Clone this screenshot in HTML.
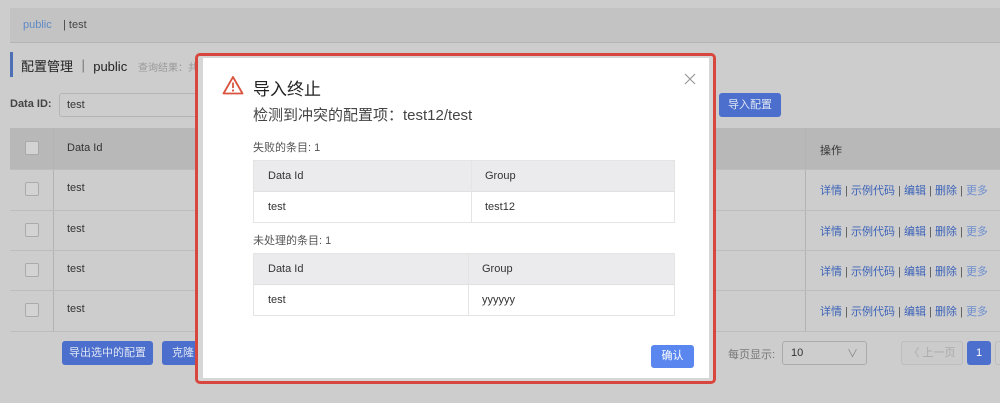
<!DOCTYPE html>
<html><head><meta charset="utf-8"><style>
*{box-sizing:border-box;margin:0;padding:0}
body{width:1000px;height:403px;overflow:hidden;background:#cdcdcd;font-family:"Liberation Sans","Noto Sans CJK SC",sans-serif;font-size:12px;color:#333;position:relative}
.a{position:absolute}
.lnk{color:#3c63b8}
</style></head><body>
<div class="a" style="left:10px;top:8px;width:990px;height:35px;background:#c3c3c3;border-bottom:1px solid #b5b5b5"></div>
<div class="a" style="left:23px;top:19px;color:#5d89c4;font-size:11px">public</div>
<div class="a" style="left:63px;top:19px;color:#444;font-size:11px">| test</div>
<div class="a" style="left:10px;top:52px;width:3px;height:25px;background:#4d6fb5"></div>
<div class="a" style="left:21px;top:56px;font-size:13px;color:#222">配置管理 ｜ public</div>
<div class="a" style="left:138px;top:59px;font-size:10px;color:#999">查询结果：共</div>
<div class="a" style="left:10px;top:98px;font-weight:bold;font-size:11px;color:#444">Data ID:</div>
<div class="a" style="left:59px;top:93px;width:150px;height:24px;border:1px solid #b5b5b5;border-radius:3px;background:#cdcdcd;padding:5px 7px;font-size:11px">test</div>
<div class="a" style="left:719px;top:93px;width:62px;height:24px;background:#4c6ecc;border-radius:3px;color:#dfe6f5;font-size:11px;text-align:center;line-height:24px">导入配置</div>
<div class="a" style="left:10px;top:128px;width:990px;height:41px;background:#b8b8b8"></div>
<div class="a" style="left:53px;top:128px;width:1px;height:203px;background:#b3b3b3"></div>
<div class="a" style="left:805px;top:128px;width:1px;height:203px;background:#b3b3b3"></div>
<div class="a" style="left:67px;top:142px;font-size:11px">Data Id</div>
<div class="a" style="left:820px;top:142px;font-size:11px">操作</div>
<div class="a" style="left:25px;top:141px;width:14px;height:14px;border:1px solid #aaa;border-radius:2px;background:#d3d3d3"></div>
<div id="rows"></div>
<script>
var h='';[169,210,250,290].forEach(function(y){h+='<div class="a" style="left:10px;top:'+y+'px;width:990px;height:1px;background:#bdbdbd"></div><div class="a" style="left:25px;top:'+(y+13)+'px;width:14px;height:14px;border:1px solid #aaa;border-radius:2px;background:#d3d3d3"></div><div class="a" style="left:67px;top:'+(y+13)+'px;font-size:11px">test</div><div class="a" style="left:820px;top:'+(y+13)+'px;font-size:11px;color:#555"><span class="lnk">详情</span> | <span class="lnk">示例代码</span> | <span class="lnk">编辑</span> | <span class="lnk">删除</span> | <span style="color:#6f8fcf">更多</span></div>'});h+='<div class="a" style="left:10px;top:331px;width:990px;height:1px;background:#bdbdbd"></div>';document.getElementById('rows').innerHTML=h;
</script>
<div class="a" style="left:62px;top:341px;width:91px;height:24px;background:#4c6ecc;border-radius:3px;color:#dfe6f5;font-size:11px;text-align:center;line-height:24px">导出选中的配置</div>
<div class="a" style="left:162px;top:341px;width:40px;height:24px;background:#4c6ecc;border-radius:3px;color:#dfe6f5;font-size:11px;line-height:24px;padding-left:10px">克隆</div>
<div class="a" style="left:728px;top:346px;font-size:11px;color:#777">每页显示:</div>
<div class="a" style="left:782px;top:341px;width:85px;height:24px;border:1px solid #aaa;border-radius:3px;padding:5px 8px;font-size:11px">10<span style="position:absolute;right:8px;top:3px;color:#888">∨</span></div>
<div class="a" style="left:901px;top:341px;width:62px;height:24px;border:1px solid #bdbdbd;border-radius:3px;background:#cbcbcb;color:#aaa;font-size:11px;text-align:center;line-height:22px">〈 上一页</div>
<div class="a" style="left:967px;top:341px;width:24px;height:24px;background:#4c6ecc;border-radius:3px;color:#fff;font-size:11px;text-align:center;line-height:24px">1</div>
<div class="a" style="left:995px;top:341px;width:8px;height:24px;border:1px solid #bdbdbd;border-radius:3px"></div>

<div class="a" style="left:195px;top:53px;width:521px;height:331px;border:3px solid #d8473d;border-radius:5px;background:#d6d6d6"></div>
<div class="a" style="left:203px;top:58px;width:506px;height:320px;background:#fff">
<svg class="a" style="left:19px;top:17px" width="22" height="20" viewBox="0 0 22 20"><path d="M11 2 L20.5 18.5 L1.5 18.5 Z" fill="none" stroke="#d9533f" stroke-width="1.8" stroke-linejoin="round"/><path d="M11 7.5v5.5" stroke="#d9533f" stroke-width="1.8"/><circle cx="11" cy="15.5" r="1.1" fill="#d9533f"/></svg>
<div class="a" style="left:50px;top:17px;font-size:17px;color:#222">导入终止</div>
<div class="a" style="left:50px;top:46px;font-size:15px;color:#444">检测到冲突的配置项：test12/test</div>
<svg class="a" style="left:481px;top:15px" width="12" height="12"><path d="M1 1L11 11M11 1L1 11" stroke="#999" stroke-width="1.2"/></svg>
<div class="a" style="left:50px;top:81px;font-size:11px;color:#555">失败的条目: 1</div>
<div class="a" style="left:50px;top:102px;width:422px;height:63px;border:1px solid #e4e4e4">
<div style="height:31px;background:#ebebed;border-bottom:1px solid #e0e0e0;position:relative"><span class="a" style="left:14px;top:9px;font-size:11px">Data Id</span><span class="a" style="left:231px;top:9px;font-size:11px">Group</span></div>
<div class="a" style="left:217px;top:0;width:1px;height:61px;background:#e4e4e4"></div>
<span class="a" style="left:14px;top:40px;font-size:11px">test</span><span class="a" style="left:231px;top:40px;font-size:11px">test12</span></div>
<div class="a" style="left:50px;top:174px;font-size:11px;color:#555">未处理的条目: 1</div>
<div class="a" style="left:50px;top:195px;width:422px;height:63px;border:1px solid #e4e4e4">
<div style="height:31px;background:#ebebed;border-bottom:1px solid #e0e0e0;position:relative"><span class="a" style="left:14px;top:9px;font-size:11px">Data Id</span><span class="a" style="left:228px;top:9px;font-size:11px">Group</span></div>
<div class="a" style="left:214px;top:0;width:1px;height:61px;background:#e4e4e4"></div>
<span class="a" style="left:14px;top:40px;font-size:11px">test</span><span class="a" style="left:228px;top:40px;font-size:11px">yyyyyy</span></div>
<div class="a" style="left:448px;top:287px;width:43px;height:23px;background:#5a86ef;border-radius:3px;color:#fff;font-size:11px;text-align:center;line-height:23px">确认</div>
</div>
</body></html>
